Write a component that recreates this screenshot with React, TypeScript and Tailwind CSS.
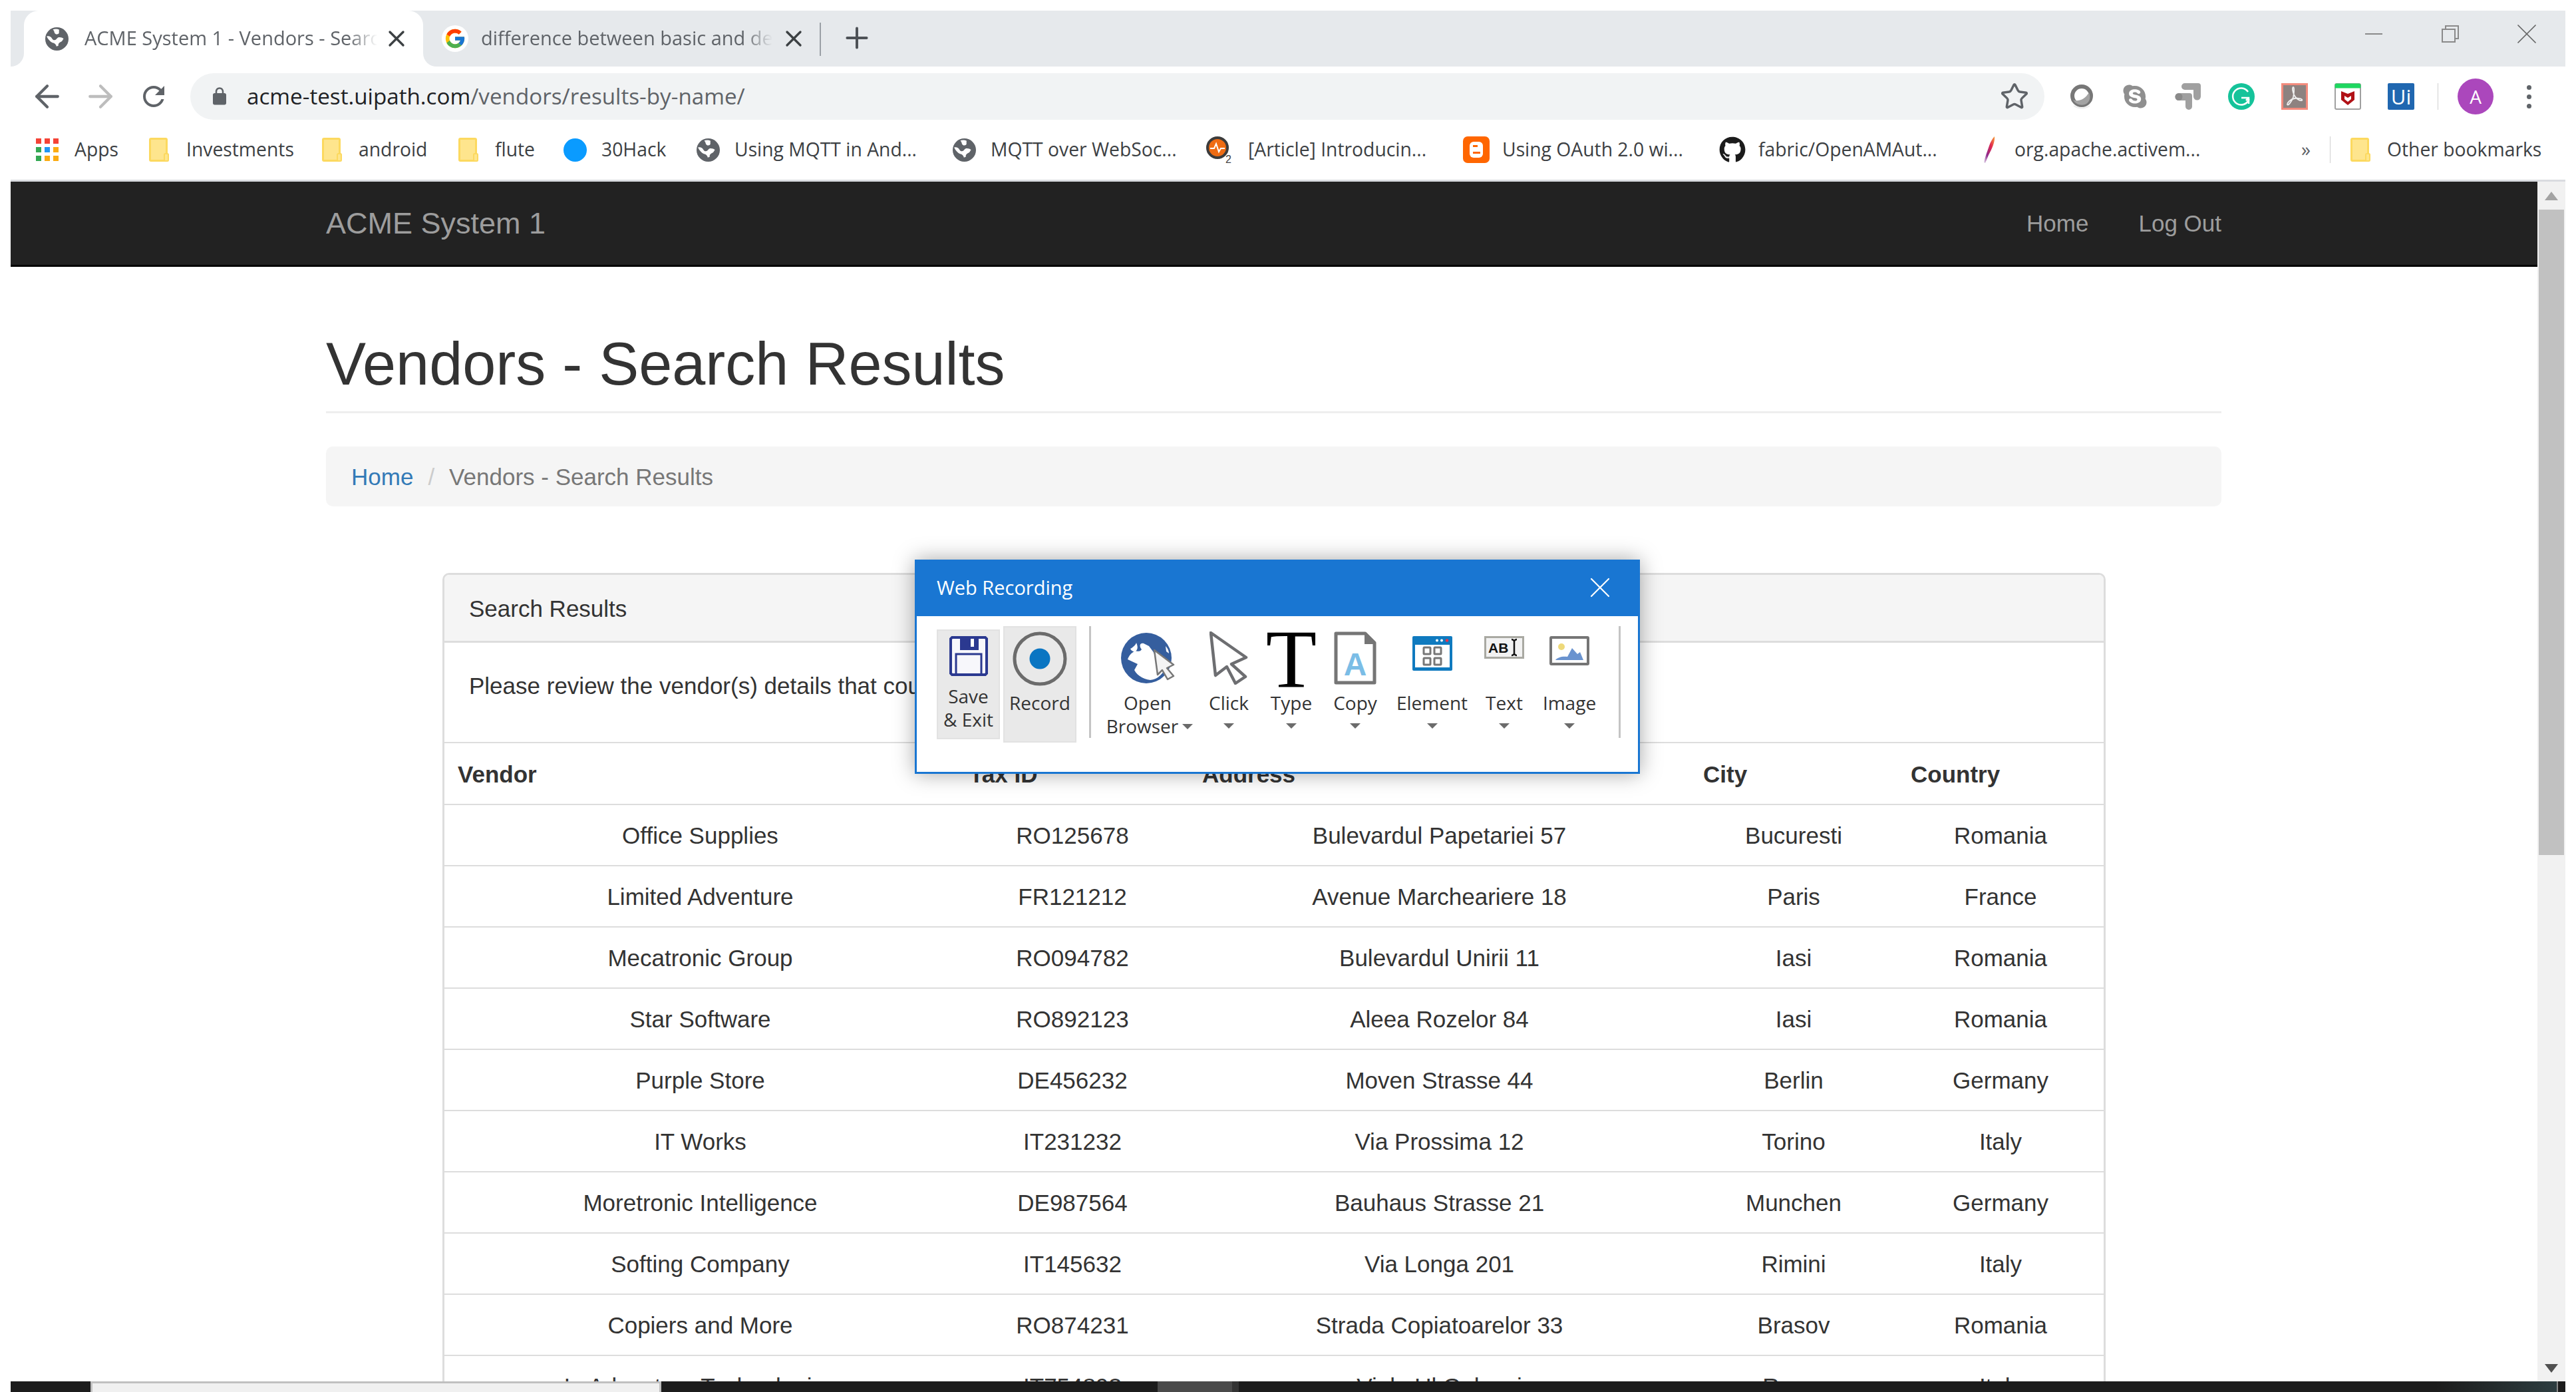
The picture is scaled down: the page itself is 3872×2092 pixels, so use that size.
import { ArrowLeft, ArrowRight, Plus, Star, X } from 'lucide-react'
import type { ReactNode } from 'react'
import { FaGithub, FaSkype } from 'react-icons/fa'
import { FcGoogle } from 'react-icons/fc'

const VENDORS = [
  ['Office Supplies', 'RO125678', 'Bulevardul Papetariei 57', 'Bucuresti', 'Romania'],
  ['Limited Adventure', 'FR121212', 'Avenue Marcheariere 18', 'Paris', 'France'],
  ['Mecatronic Group', 'RO094782', 'Bulevardul Unirii 11', 'Iasi', 'Romania'],
  ['Star Software', 'RO892123', 'Aleea Rozelor 84', 'Iasi', 'Romania'],
  ['Purple Store', 'DE456232', 'Moven Strasse 44', 'Berlin', 'Germany'],
  ['IT Works', 'IT231232', 'Via Prossima 12', 'Torino', 'Italy'],
  ['Moretronic Intelligence', 'DE987564', 'Bauhaus Strasse 21', 'Munchen', 'Germany'],
  ['Softing Company', 'IT145632', 'Via Longa 201', 'Rimini', 'Italy'],
  ['Copiers and More', 'RO874231', 'Strada Copiatoarelor 33', 'Brasov', 'Romania'],
  ['In Adventure Technologies', 'IT754893', 'Viale Ul Galvani', 'Roma', 'Italy'],
]

function Globe({ size = 35 }: { size?: number }) {
  return (
    <svg width={size} height={size} viewBox="0 0 16 16" className="shrink-0">
      <circle cx="8" cy="8" r="8" fill="#5f6368" />
      <path d="M1 6.200c1.600-.5 3 .3 3.600 1.400.5 1 1.600 1.500 2.600 1 .7-.4 1-1.500 2-1.700 1.300-.2 2.600.3 3.400.9-.6 1-.9 2-2 2.300-1.100.4-1.800 1.400-1.600 2.600l-1.300.4c-.3-1.500-1.300-2.300-2.700-2.500C4.200 10.300 2.200 9 1 6.200z" fill="#fff" />
      <path d="M5.300 1.500C6.900 1 8.500 1.100 9.600 1.700 9.200 2.900 9.900 3.600 9.100 4.500 8 5.200 6.600 4.700 6.300 3.500 6.200 2.700 5.700 2.100 5.300 1.500z" fill="#fff" />
    </svg>
  )
}

function Folder() {
  return (
    <svg width="30" height="36" viewBox="0 0 30 36" className="shrink-0">
      <rect x="1.500" y="1.500" width="25" height="33" rx="1.500" fill="#fee58d" stroke="#fcd95f" strokeWidth="3" />
      <rect x="23" y="24" width="6" height="11" rx="1.500" fill="#fee58d" stroke="#fcd95f" strokeWidth="2" />
    </svg>
  )
}

function AppsGrid() {
  const colors = ['#f44336', '#f44336', '#f44336', '#34a853', '#2196f3', '#fbab12', '#34a853', '#fbab12', '#fbab12']
  return (
    <div className="grid h-[34px] w-[34px] shrink-0 grid-cols-3 gap-[5px]">
      {colors.map((c, i) => (
        <span key={i} className="h-[8px] w-[8px]" style={{ backgroundColor: c }} />
      ))}
    </div>
  )
}

function O2Icon() {
  return (
    <svg width="40" height="40" viewBox="0 0 40 40" className="shrink-0">
      <circle cx="17" cy="17" r="15" fill="#ef6c13" stroke="#3c3c3c" strokeWidth="4" />
      <path d="M6 18h6l3-7 4 12 3-5h6" fill="none" stroke="#fff" strokeWidth="2" />
      <text x="29" y="40" fontSize="16" fontFamily="Liberation Sans" fill="#444">2</text>
    </svg>
  )
}

function BloggerIcon() {
  return (
    <svg width="40" height="40" viewBox="0 0 40 40" className="shrink-0">
      <rect width="40" height="40" rx="7" fill="#ff6600" />
      <rect x="10" y="8" width="20" height="24" rx="6" fill="#fff" />
      <rect x="15" y="13" width="7" height="3" fill="#ff6600" />
      <rect x="15" y="23" width="11" height="3" fill="#ff6600" />
    </svg>
  )
}

function FeatherIcon() {
  return (
    <svg width="26" height="40" viewBox="0 0 26 40" className="shrink-0">
      <defs>
        <linearGradient id="feather" x1="1" y1="0" x2="0" y2="1">
          <stop offset="0" stopColor="#f6a13a" />
          <stop offset="0.35" stopColor="#e0284f" />
          <stop offset="0.7" stopColor="#8e2a8e" />
          <stop offset="1" stopColor="#e6e0ee" />
        </linearGradient>
      </defs>
      <path d="M23 0c1 8-4 19-9 28L9 40 7 39c2-9 5-16 8-25 2-6 5-11 8-14z" fill="url(#feather)" />
    </svg>
  )
}

function Bookmark({ icon, label, className }: { icon: ReactNode; label: string; className: string }) {
  return (
    <div className={`flex shrink-0 items-center whitespace-nowrap ${className}`}>
      {icon}
      <span className="mb-[2px]">{label}</span>
    </div>
  )
}

function ExtensionIcons() {
  return (
    <>
      <div className="flex w-[80px] justify-center">
        <svg width="36" height="38" viewBox="0 0 36 38">
          <circle cx="18" cy="18" r="14" fill="#fff" stroke="#777" strokeWidth="6" />
          <path d="M5 24c6 3 17 1 24-11 3 8 1 15-6 18-7 2-14 0-18-7z" fill="#a3a3a3" />
          <path d="M6 33c8 5 16 5 24 0" fill="none" stroke="#eee" strokeWidth="2" />
        </svg>
      </div>
      <div className="flex w-[80px] justify-center">
        <FaSkype size={40} color="#8f8f8f" />
      </div>
      <div className="flex w-[80px] justify-center">
        <svg width="40" height="40" viewBox="0 0 40 40">
          <path d="M15 0h20a4 4 0 0 1 4 4v16a5.500 5.500 0 0 1-11 0V10H15a5 5 0 0 1 0-10z" fill="#a0a0a0" />
          <path d="M6 15h16a4 4 0 0 1 4 4v16a5 5 0 0 1-10 0V26H6a5.500 5.500 0 0 1 0-11z" fill="#a0a0a0" />
          <circle cx="6" cy="20.500" r="5.500" fill="#8a8a8a" />
        </svg>
      </div>
      <div className="flex w-[80px] justify-center">
        <svg width="40" height="40" viewBox="0 0 40 40">
          <circle cx="20" cy="20" r="20" fill="#15c39a" />
          <path d="M30 13a12.500 12.500 0 1 0 1.500 11" fill="none" stroke="#fff" strokeWidth="2.500" />
          <path d="M20 22h11v9M27 26l4-4" fill="none" stroke="#fff" strokeWidth="2.500" />
        </svg>
      </div>
      <div className="flex w-[80px] justify-center">
        <svg width="40" height="40" viewBox="0 0 40 40">
          <rect x="1.500" y="1.500" width="37" height="37" fill="#8d8280" stroke="#f28b7d" strokeWidth="3" />
          <path d="M18 6c-2 0-1 8 2 13 2 4 8 8 11 7 2-2-4-4-11-3-6 1-11 6-11 9 1 3 7-5 9-11 1-5 2-15 0-15z" fill="none" stroke="#eee" strokeWidth="1.800" />
        </svg>
      </div>
      <div className="flex w-[80px] justify-center">
        <svg width="40" height="40" viewBox="0 0 40 40">
          <rect x="1" y="1" width="38" height="38" rx="2" fill="#fff" stroke="#a0a0a0" strokeWidth="2" />
          <path d="M1 7V3a2 2 0 0 1 2-2h34a2 2 0 0 1 2 2v4z" fill="#1ed760" stroke="#1ed760" />
          <path d="M10 12l10 4 10-4v13l-10 8-10-8z" fill="#b11116" />
          <path d="M15 19l5 3 5-3v5l-5 4-5-4z" fill="#fff" />
        </svg>
      </div>
      <div className="flex w-[80px] justify-center">
        <div className="flex h-[40px] w-[40px] items-center justify-center rounded-[2px] bg-[#2067b0] text-[31px] leading-none text-white">Ui</div>
      </div>
    </>
  )
}

function ChromeBar() {
  return (
    <div className="mx-4 pt-4 font-['Open_Sans']">
      <div className="flex h-[84px] items-start bg-[#e6e9ec]">
        <div className="relative ml-5 flex h-[84px] w-[600px] items-center rounded-t-[22px] bg-white pl-[32px] text-[29px] text-[#5f6368]">
          <span className="absolute bottom-0 -left-5 h-5 w-5 bg-white">
            <span className="block h-5 w-5 rounded-br-[20px] bg-[#e6e9ec]" />
          </span>
          <span className="absolute bottom-0 -right-5 h-5 w-5 bg-white">
            <span className="block h-5 w-5 rounded-bl-[20px] bg-[#e6e9ec]" />
          </span>
          <Globe />
          <span className="mb-[2px] ml-[24px] w-[440px] overflow-hidden whitespace-nowrap [mask-image:linear-gradient(to_right,black_90%,transparent)]">ACME System 1 - Vendors - Search Results</span>
          <X size={40} strokeWidth={2} className="ml-[9px] shrink-0 text-[#3c4043]" />
        </div>
        <div className="flex h-[84px] w-[596px] items-center pl-[28px] text-[29px] text-[#5f6368]">
          <span className="flex h-[40px] w-[40px] shrink-0 items-center justify-center rounded-full bg-white">
            <FcGoogle size={34} />
          </span>
          <span className="mb-[2px] ml-[19px] w-[438px] overflow-hidden whitespace-nowrap [mask-image:linear-gradient(to_right,black_90%,transparent)]">difference between basic and desktop recording</span>
          <X size={40} strokeWidth={2} className="ml-[12px] shrink-0 text-[#3c4043]" />
        </div>
        <div className="mt-[18px] h-[50px] w-[2px] bg-[#9aa0a6]" />
        <Plus size={50} strokeWidth={1.900} className="ml-[29px] mt-[16px] text-[#4d5156]" />
        <div className="ml-auto flex h-[70px] items-center">
          <div className="flex w-[115px] justify-center">
            <span className="h-[2px] w-[26px] bg-[#8a8a8a]" />
          </div>
          <div className="flex w-[115px] justify-center">
            <svg width="26" height="26" viewBox="0 0 26 26" fill="none" stroke="#8a8a8a" strokeWidth="2">
              <rect x="1" y="6" width="19" height="19" />
              <path d="M6 6V1h19v19h-5" />
            </svg>
          </div>
          <div className="flex w-[116px] justify-center">
            <X size={52} strokeWidth={0.800} className="text-[#666]" />
          </div>
        </div>
      </div>

      <div className="flex h-[80px] items-start pt-[10px]">
        <div className="flex h-[70px] items-center pl-[15px]">
          <div className="flex w-[80px] justify-center">
            <ArrowLeft size={54} strokeWidth={1.900} className="text-[#5f6368]" />
          </div>
          <div className="flex w-[80px] justify-center">
            <ArrowRight size={54} strokeWidth={1.900} className="text-[#bdbdbd]" />
          </div>
          <div className="flex w-[80px] justify-center">
            <svg width="48" height="48" viewBox="0 0 24 24" fill="#5f6368">
              <path d="M17.650 6.350C16.200 4.900 14.210 4 12 4c-4.420 0-7.990 3.580-7.990 8s3.570 8 7.990 8c3.730 0 6.840-2.550 7.730-6h-2.080c-.82 2.330-3.040 4-5.650 4-3.310 0-6-2.690-6-6s2.690-6 6-6c1.660 0 3.140.69 4.220 1.780L13 11h7V4l-2.350 2.350z" />
            </svg>
          </div>
        </div>
        <div className="ml-[15px] flex h-[70px] w-[2787px] items-center rounded-full bg-[#f1f3f4] pl-[29px] pr-[23px]">
          <svg width="30" height="30" viewBox="0 0 24 24" fill="#5f6368" className="shrink-0">
            <path d="M18 8h-1V6c0-2.760-2.240-5-5-5S7 3.240 7 6v2H6c-1.100 0-2 .9-2 2v10c0 1.100.9 2 2 2h12c1.100 0 2-.9 2-2V10c0-1.100-.9-2-2-2zM9 6c0-1.660 1.340-3 3-3s3 1.340 3 3v2H9V6z" />
          </svg>
          <span className="ml-[26px] text-[33.2px] text-[#202124]">
            acme-test.uipath.com<span className="text-[#5f6368]">/vendors/results-by-name/</span>
          </span>
          <Star size={44} strokeWidth={1.900} className="ml-auto text-[#5f6368]" />
        </div>
        <div className="ml-[16px] flex h-[70px] items-center">
          <ExtensionIcons />
          <div className="ml-[15px] h-[40px] w-[1px] bg-[#d0d0d0]" />
          <div className="ml-[29px] flex h-[54px] w-[54px] items-center justify-center rounded-full bg-[#ab47bc] text-[28px] text-white">A</div>
          <div className="ml-[33px] flex w-[40px] flex-col items-center gap-[7px]">
            <span className="h-[7px] w-[7px] rounded-full bg-[#5f6368]" />
            <span className="h-[7px] w-[7px] rounded-full bg-[#5f6368]" />
            <span className="h-[7px] w-[7px] rounded-full bg-[#5f6368]" />
          </div>
        </div>
      </div>

      <div className="flex h-[93px] items-center border-b-[3px] border-[#dadce0] pl-[38px] text-[28.3px] text-[#3c4043]">
        <Bookmark className="w-[170px] gap-[24px]" icon={<AppsGrid />} label="Apps" />
        <Bookmark className="w-[260px] gap-[26px]" icon={<Folder />} label="Investments" />
        <Bookmark className="w-[205px] gap-[25px]" icon={<Folder />} label="android" />
        <Bookmark className="w-[158px] gap-[25px]" icon={<Folder />} label="flute" />
        <Bookmark className="w-[200px] gap-[22px]" icon={<span className="h-[35px] w-[35px] shrink-0 rounded-full bg-[#0a9bff]" />} label="30Hack" />
        <Bookmark className="w-[385px] gap-[22px]" icon={<Globe />} label="Using MQTT in And..." />
        <Bookmark className="w-[381px] gap-[22px]" icon={<Globe />} label="MQTT over WebSoc..." />
        <Bookmark className="w-[386px] gap-[23px]" icon={<O2Icon />} label="[Article] Introducin..." />
        <Bookmark className="w-[385px] gap-[19px]" icon={<BloggerIcon />} label="Using OAuth 2.0 wi..." />
        <Bookmark className="w-[391px] gap-[19px]" icon={<FaGithub size={40} color="#1b1b1b" className="shrink-0" />} label="fabric/OpenAMAut..." />
        <Bookmark className="w-[476px] gap-[27px]" icon={<FeatherIcon />} label="org.apache.activem..." />
        <span className="mb-[2px] w-[30px] text-center text-[#5f6368]">»</span>
        <div className="ml-[21px] h-[40px] w-[1px] bg-[#d0d0d0]" />
        <Bookmark className="ml-[30px] gap-[25px]" icon={<Folder />} label="Other bookmarks" />
      </div>
    </div>
  )
}

function Page() {
  return (
    <div className="w-[3798px] text-[35px] leading-[50px] text-[#333]">
      <nav className="h-[128px] border-b-[3px] border-black bg-[#222] text-[#9d9d9d]">
        <div className="ml-[474px] flex h-[125px] w-[2849px] items-center justify-between">
          <span className="text-[45px]">ACME System 1</span>
          <div className="flex gap-[75px]">
            <span>Home</span>
            <span>Log Out</span>
          </div>
        </div>
      </nav>

      <div className="ml-[474px] w-[2849px]">
        <h1 className="border-b-[3px] border-[#eee] pb-[21px] pt-[97px] text-[90px] leading-[99px] text-[#333]">Vendors - Search Results</h1>

        <div className="mt-[50px] flex h-[90px] items-center rounded-[10px] bg-[#f5f5f5] px-[38px] pt-[2px]">
          <span className="text-[#337ab7]">Home</span>
          <span className="mx-[22px] text-[#ccc]">/</span>
          <span className="text-[#777]">Vendors - Search Results</span>
        </div>

        <div className="ml-[175px] mt-[100px] w-[2500px] rounded-t-[10px] border-x-[3px] border-t-[3px] border-[#ddd]">
          <div className="flex h-[102px] items-center rounded-t-[7px] border-b-[3px] border-[#ddd] bg-[#f5f5f5] pl-[37px] pt-[2px]">Search Results</div>
          <div className="h-[149px] pl-[37px] pt-[40px]">Please review the vendor(s) details that could match your search.</div>
          <table className="w-[2494px] table-fixed border-collapse">
            <colgroup>
              <col className="w-[769px]" />
              <col className="w-[350px]" />
              <col className="w-[753px]" />
              <col className="w-[312px]" />
              <col className="w-[310px]" />
            </colgroup>
            <thead>
              <tr className="h-[93px] border-y-2 border-[#ddd] text-left font-bold">
                <th className="px-[20px] pt-[2px]">Vendor</th>
                <th className="px-[20px] pt-[2px]">Tax ID</th>
                <th className="px-[20px] pt-[2px]">Address</th>
                <th className="px-[20px] pt-[2px]">City</th>
                <th className="px-[20px] pt-[2px]">Country</th>
              </tr>
            </thead>
            <tbody>
              {VENDORS.map((row) => (
                <tr key={row[0]} className="h-[92px] border-b-2 border-[#ddd] text-center">
                  {row.map((cell) => (
                    <td key={cell} className="pt-[2px]">{cell}</td>
                  ))}
                </tr>
              ))}
            </tbody>
          </table>
        </div>
      </div>
    </div>
  )
}

function Scrollbar() {
  return (
    <div className="flex h-[1803px] w-[42px] flex-col items-center bg-[#f1f1f1]">
      <div className="flex h-[42px] items-center">
        <span className="h-0 w-0 border-x-[10px] border-b-[13px] border-x-transparent border-b-[#a3a3a3]" />
      </div>
      <div className="h-[970px] w-[38px] bg-[#c1c1c1]" />
      <span className="mt-[765px] h-0 w-0 border-x-[10px] border-t-[13px] border-x-transparent border-t-[#505050]" />
    </div>
  )
}

function Caret() {
  return <span className="h-0 w-0 border-x-[8px] border-t-[8px] border-x-transparent border-t-[#6b6b6b]" />
}

function Tool({ icon, label, className }: { icon: ReactNode; label: string; className: string }) {
  return (
    <div className={`flex shrink-0 flex-col items-center ${className}`}>
      <div className="flex h-[88px] items-start justify-center">{icon}</div>
      <span className="leading-[38px]">{label}</span>
      <span className="mt-[12px] flex">
        <Caret />
      </span>
    </div>
  )
}

function RecorderDialog() {
  return (
    <div className="absolute left-[1375px] top-[841px] h-[322px] w-[1090px] border-[3px] border-[#1976d2] bg-white font-['Open_Sans'] text-[28px] text-[#333] shadow-[0_0_30px_rgba(0,0,0,0.35)]">
      <div className="flex h-[82px] items-center justify-between bg-[#1976d2] pl-[30px] pr-[31px] text-[29px] text-white">
        <span className="mb-[4px]">Web Recording</span>
        <X size={52} strokeWidth={1} className="mb-[4px]" />
      </div>
      <div className="flex items-start pt-[15px]">
        <div className="ml-[30px] mt-[5px] flex h-[165px] w-[95px] flex-col items-center border-2 border-[#e2e2e2] bg-[#e9e9e9] pt-[8px] leading-[35px]">
          <svg width="58" height="60" viewBox="0 0 58 60" className="mb-[13px] shrink-0" fill="none">
            <path d="M4 2h50l2 2v52l-2 2H4l-2-2V4z" stroke="#2b3990" strokeWidth="4" fill="#f7f7fb" />
            <rect x="16" y="2" width="28" height="19" fill="#2b3990" />
            <rect x="32" y="4" width="5" height="12" fill="#fff" />
            <rect x="10" y="27" width="38" height="31" stroke="#2b3990" strokeWidth="3" />
          </svg>
          <span>Save</span>
          <span>&amp; Exit</span>
        </div>
        <div className="ml-[5px] flex h-[175px] w-[110px] flex-col items-center border-2 border-[#e2e2e2] bg-[#e9e9e9] pt-[6px]">
          <svg width="82" height="82" viewBox="0 0 82 82" className="shrink-0">
            <circle cx="41" cy="41" r="38" fill="none" stroke="#6b6b6b" strokeWidth="5" />
            <circle cx="41" cy="41" r="15.500" fill="#0a75c2" />
          </svg>
          <span className="mt-[6px] leading-[38px]">Record</span>
        </div>
        <div className="ml-[19px] h-[168px] w-[3px] bg-[#c4c4c4]" />

        <div className="ml-[20px] flex pt-[8px]">
          <div className="flex w-[130px] shrink-0 flex-col items-center">
            <div className="flex h-[88px] items-start">
              <svg width="84" height="80" viewBox="0 0 84 80">
                <circle cx="40" cy="40" r="38" fill="#355e9e" />
                <path d="M12 42L27 49L22 58C26 66 36 72 46 73C56 72 62 66 66 60L50 30L44 22L40 20L36 18C30 17 29 22 33 27C30 32 26 28 22 30C18 32 14 36 12 42Z" fill="#fff" />
                <path d="M16 26C20 24 24 20 25 17C27 22 28 26 24 30C22 31 18 30 16 26Z" fill="#fff" />
                <path d="M69 22C72 25 74 29 74 33L70 30Z" fill="#fff" />
                <path d="M52 28L81 50L71 55L81 67L72 72L64 58L57 65Z" fill="#f4f4f4" stroke="#777" strokeWidth="2.500" strokeLinejoin="round" />
              </svg>
            </div>
            <span className="leading-[38px]">Open</span>
            <span className="relative left-[3px] flex items-center gap-[6px] leading-[33px]">
              Browser
              <Caret />
            </span>
          </div>
          <Tool
            className="w-[114px]"
            label="Click"
            icon={
              <svg width="58" height="80" viewBox="0 0 58 80">
                <path d="M2 2L55 39L33 49L54 68L39 78L26 53L9 66Z" fill="#fff" stroke="#6d6e71" strokeWidth="4.500" strokeLinejoin="round" />
              </svg>
            }
          />
          <Tool className="w-[74px]" label="Type" icon={<span className="block h-[80px] font-['Liberation_Serif'] text-[125px] leading-[84px] text-black">T</span>} />
          <Tool
            className="w-[118px]"
            label="Copy"
            icon={
              <svg width="64" height="80" viewBox="0 0 64 80">
                <path d="M3 3h44l14 14v60H3z" fill="#fff" stroke="#757575" strokeWidth="5" strokeLinejoin="round" />
                <path d="M46 3v16h15z" fill="#757575" />
                <text x="32" y="66" textAnchor="middle" fontFamily="Liberation Sans" fontWeight="700" fontSize="48" fill="#7bbde6">A</text>
              </svg>
            }
          />
          <Tool
            className="w-[113px]"
            label="Element"
            icon={
              <svg width="60" height="52" viewBox="0 0 60 52" className="mt-[7px]">
                <rect width="60" height="52" rx="2" fill="#0f7abf" />
                <rect x="4" y="13" width="52" height="34" fill="#fff" />
                <circle cx="37" cy="6.500" r="2" fill="#fff" />
                <circle cx="44" cy="6.500" r="2" fill="#fff" />
                <circle cx="52" cy="6.500" r="2.300" fill="#e8334a" />
                <g fill="#fff" stroke="#777" strokeWidth="3">
                  <rect x="17" y="17" width="10" height="10" rx="1" />
                  <rect x="33" y="17" width="10" height="10" rx="1" />
                  <rect x="17" y="33" width="10" height="10" rx="1" />
                  <rect x="33" y="33" width="10" height="10" rx="1" />
                </g>
              </svg>
            }
          />
          <Tool
            className="w-[104px]"
            label="Text"
            icon={
              <svg width="60" height="34" viewBox="0 0 60 34" className="mt-[7px]">
                <rect x="1.500" y="1.500" width="57" height="31" fill="#f2f2f2" stroke="#a9a9a2" strokeWidth="3" />
                <text x="6" y="25" fontFamily="Liberation Sans" fontWeight="700" fontSize="21" fill="#111">AB</text>
                <path d="M41 5c3 0 3 2 4 2s1-2 4-2M45 7v20M41 29c3 0 3-2 4-2s1 2 4 2" fill="none" stroke="#111" strokeWidth="2.500" />
              </svg>
            }
          />
          <Tool
            className="w-[92px]"
            label="Image"
            icon={
              <svg width="60" height="44" viewBox="0 0 60 44" className="mt-[7px]">
                <rect x="2" y="2" width="56" height="40" rx="1" fill="#fff" stroke="#757575" strokeWidth="4" />
                <circle cx="18" cy="16" r="5" fill="#eed97a" />
                <path d="M9 36c3-4 10-6 18-5l7-13 8 9 4-3 5 12z" fill="#6a93cf" />
              </svg>
            }
          />
        </div>
        <div className="ml-[28px] h-[168px] w-[3px] bg-[#c4c4c4]" />
      </div>
    </div>
  )
}

function Taskbar() {
  return (
    <div className="absolute bottom-0 left-4 right-4 flex h-[16px] bg-[#1c1c1c]">
      <div className="ml-[120px] h-[16px] w-[858px] border-x-[3px] border-t-[3px] border-[#c0c0c0] bg-[#f0f0f0]" />
      <div className="ml-[746px] h-[16px] w-[112px] bg-[#4a4a4a]" />
      <div className="h-[16px] w-[10px] bg-[#333]" />
      <div className="ml-auto h-[16px] w-[182px] bg-gradient-to-r from-[#1c1c1c] to-[#2d3d40]" />
      <div className="h-[16px] w-[2px] bg-[#888]" />
      <div className="h-[16px] w-[11px]" />
    </div>
  )
}

export default function App() {
  return (
    <div className="relative h-[2092px] w-[3872px] overflow-hidden bg-white font-['Liberation_Sans',Arial,sans-serif]">
      <ChromeBar />
      <div className="ml-4 flex">
        <Page />
        <Scrollbar />
      </div>
      <RecorderDialog />
      <Taskbar />
    </div>
  )
}
